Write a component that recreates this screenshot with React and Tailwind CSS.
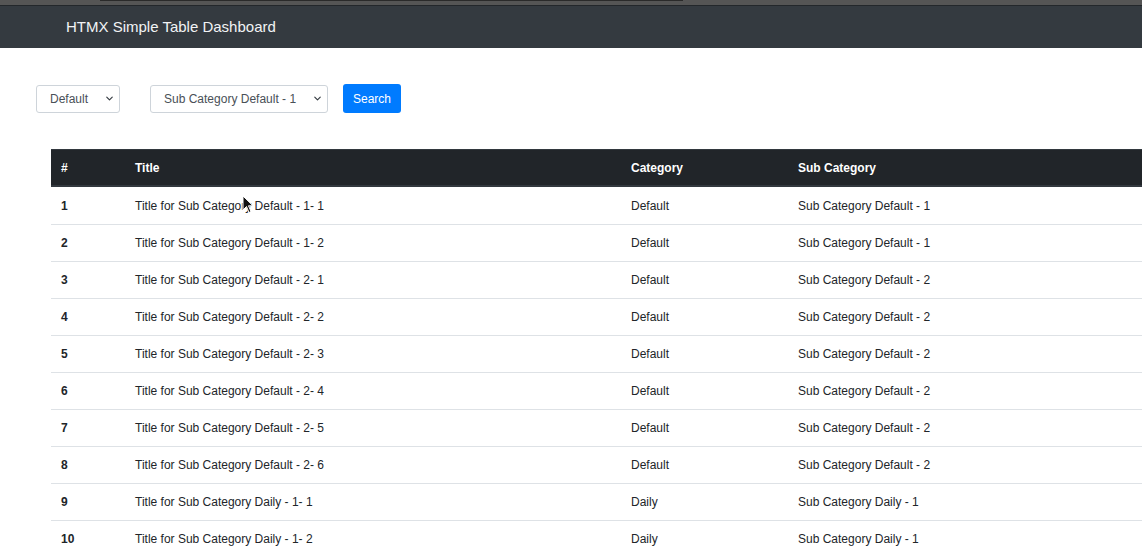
import { ChevronDown } from 'lucide-react';

const rows = [
    { id: 1, title: 'Title for Sub Category Default - 1- 1', cat: 'Default', sub: 'Sub Category Default - 1' },
    { id: 2, title: 'Title for Sub Category Default - 1- 2', cat: 'Default', sub: 'Sub Category Default - 1' },
    { id: 3, title: 'Title for Sub Category Default - 2- 1', cat: 'Default', sub: 'Sub Category Default - 2' },
    { id: 4, title: 'Title for Sub Category Default - 2- 2', cat: 'Default', sub: 'Sub Category Default - 2' },
    { id: 5, title: 'Title for Sub Category Default - 2- 3', cat: 'Default', sub: 'Sub Category Default - 2' },
    { id: 6, title: 'Title for Sub Category Default - 2- 4', cat: 'Default', sub: 'Sub Category Default - 2' },
    { id: 7, title: 'Title for Sub Category Default - 2- 5', cat: 'Default', sub: 'Sub Category Default - 2' },
    { id: 8, title: 'Title for Sub Category Default - 2- 6', cat: 'Default', sub: 'Sub Category Default - 2' },
    { id: 9, title: 'Title for Sub Category Daily - 1- 1', cat: 'Daily', sub: 'Sub Category Daily - 1' },
    { id: 10, title: 'Title for Sub Category Daily - 1- 2', cat: 'Daily', sub: 'Sub Category Daily - 1' },
];

function Select({ label, width }) {
    return (
        <div className={`${width} h-[28px] flex items-center justify-between pl-[13px] pr-[4px] border border-[#ced4da] rounded-[3px] bg-white text-[12px] text-[#495057]`}>
            <span>{label}</span>
            <ChevronDown size={11} strokeWidth={2.5} className="text-[#343a40]" />
        </div>
    );
}

export default function App() {
    return (
        <div className="relative w-[1142px] h-[552px] overflow-hidden bg-white font-['Liberation_Sans',Arial,sans-serif] text-[#212529]">
            {/* browser strip */}
            <div className="h-[5px] bg-[#555555] flex">
                <div className="ml-[100px] w-[583px] h-[1px] bg-[#2a2a2a]" />
            </div>
            <div className="h-[1px] bg-[#23272b]" />

            {/* Navbar */}
            <div className="h-[42px] bg-[#343a40] flex items-center pl-[66px]">
                <span className="text-[15px] text-[#f1f3f5]">HTMX Simple Table Dashboard</span>
            </div>

            {/* Filters */}
            <div className="flex items-center pt-[36px] pl-[36px]">
                <Select label="Default" width="w-[84px]" />
                <div className="ml-[30px]">
                    <Select label="Sub Category Default - 1" width="w-[178px]" />
                </div>
                <button type="button" className="ml-[15px] h-[29px] px-[10px] rounded-[3px] bg-[#007bff] text-white text-[12px]">
                    Search
                </button>
            </div>

            {/* Table */}
            <div className="mt-[36px] ml-[51px] w-[1120px]">
                <div className="flex h-[38px] items-center bg-[#212529] border-t border-[#32383e] border-b-2 border-b-[#32383e] text-white text-[12px] font-bold">
                    <div className="w-[74px] pl-[10px]">#</div>
                    <div className="w-[496px] pl-[10px]">Title</div>
                    <div className="w-[167px] pl-[10px]">Category</div>
                    <div className="flex-1 pl-[10px]">Sub Category</div>
                </div>
                {rows.map((r, i) => (
                    <div key={r.id} className={`flex h-[37px] items-center text-[12px] ${i > 0 ? 'border-t border-[#dee2e6]' : ''}`}>
                        <div className="w-[74px] pl-[10px] font-bold">{r.id}</div>
                        <div className="w-[496px] pl-[10px]">{r.title}</div>
                        <div className="w-[167px] pl-[10px]">{r.cat}</div>
                        <div className="flex-1 pl-[10px]">{r.sub}</div>
                    </div>
                ))}
            </div>

            {/* mouse cursor */}
            <svg className="absolute left-[242px] top-[195px]" width="12" height="19" viewBox="0 0 12 19">
                <path d="M1 1 L1 15 L4.5 11.5 L7 17.5 L9 16.5 L6.5 10.8 L11 10.8 Z" fill="#111" stroke="#fff" strokeWidth="1" />
            </svg>
        </div>
    );
}
